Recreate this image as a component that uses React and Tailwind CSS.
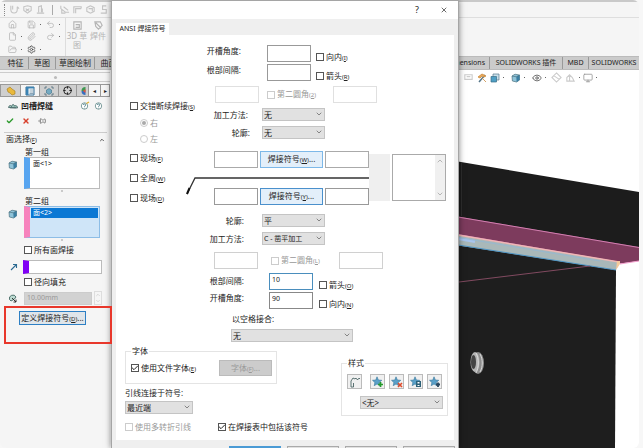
import React from "react";
import clsx from "clsx";
import {
  Home,
  Save,
  Undo2,
  Redo2,
  File,
  Paperclip,
  FolderOpen,
  Settings,
  ChevronDown,
  ChevronUp,
  Eye,
  Monitor,
  Crosshair,
  X,
  Check,
  Pin,
} from "lucide-react";

/* ---------- small form parts ---------- */

const Key = ({ children }) => (
  <span className="text-[6px]">
    (<u>{children}</u>)
  </span>
);

const CheckBox = ({ id, label, hotkey, checked, disabled, className }) => (
  <label
    htmlFor={id}
    className={clsx(
      "flex h-2.5 items-center gap-0.5 whitespace-nowrap",
      disabled && "text-[#999]",
      className
    )}
  >
    <span className="relative flex size-2 shrink-0">
      <input
        id={id}
        type="checkbox"
        defaultChecked={checked}
        disabled={disabled}
        className="peer size-2 appearance-none border border-[#555] bg-white disabled:border-[#ccc]"
      />
      <Check
        strokeWidth={3}
        className="pointer-events-none absolute inset-0 hidden size-2 peer-checked:block"
      />
    </span>
    <span>
      {label}
      {hotkey && <Key>{hotkey}</Key>}
    </span>
  </label>
);

const RadioItem = ({ id, label, checked }) => (
  <label htmlFor={id} className="flex h-2.5 items-center gap-0.5 text-[#999]">
    <span className="relative flex size-2">
      <input
        id={id}
        type="radio"
        name="side"
        disabled
        defaultChecked={checked}
        className="peer size-2 appearance-none rounded-full border border-[#ccc] bg-white"
      />
      <span className="absolute inset-0.5 hidden rounded-full bg-[#aaa] peer-checked:block" />
    </span>
    {label}
  </label>
);

const TextBox = ({ id, label, value = "", className }) => (
  <input
    id={id}
    type="text"
    aria-label={label}
    defaultValue={value}
    className={clsx("h-[17px] w-11 shrink-0 border bg-white px-0.5 pb-1 text-[7px]", className || "border-[#999]")}
  />
);

const SelectBox = ({ id, label, value, className }) => (
  <span className={clsx("relative flex h-[13px] shrink-0", className)}>
    <select
      id={id}
      aria-label={label}
      className="h-full w-full appearance-none border border-[#c4c4c4] bg-[#e1e1e1] pl-px leading-none"
    >
      <option>{value}</option>
    </select>
    <ChevronDown className="pointer-events-none absolute top-0.5 right-0.5 size-2 text-[#555]" />
  </span>
);

const FieldLabel = ({ htmlFor, children, className }) => (
  <label htmlFor={htmlFor} className={clsx("shrink-0 text-right leading-[12px] whitespace-nowrap", className)}>
    {children}
  </label>
);

/* ---------- icons ---------- */

const WeldGlyph = ({ d, className = "text-[#c4c4c4]" }) => (
  <svg viewBox="0 0 12 12" className={clsx("size-[11px]", className)} fill="none" stroke="currentColor" strokeWidth="1.2">
    <path d={d} />
  </svg>
);

const CubeIcon = () => (
  <svg viewBox="0 0 10 10" className="size-2.5">
    <path d="M1 3 4 1.2 8.5 2v5L5.6 9 1.4 8z" fill="#8fc3d8" stroke="#4b7180" strokeWidth=".7" />
    <path d="M5.3 3.8 8.5 2v5L5.6 9z" fill="#3b7fa3" />
    <path d="M1 3 5.3 3.8 8.5 2" fill="none" stroke="#4b7180" strokeWidth=".7" />
  </svg>
);

const StackIcon = () => (
  <svg viewBox="0 0 10 10" className="size-2.5">
    <path d="M3 1h6v6H3z" fill="#c9e0ea" stroke="#56778a" strokeWidth=".7" />
    <path d="M1 3.500h5.500V9H1z" fill="#4f9fc4" stroke="#3a6f88" strokeWidth=".7" />
  </svg>
);

const BeadIcon = () => (
  <svg viewBox="0 0 10 8" className="h-2 w-2.5">
    <path d="M.5 5.5C1 3 3 3 3.5 4.5 4 2 6 2 6.5 4 8 3 9.500 4 9.500 6z" fill="#9cc7bd" stroke="#3d5c5c" strokeWidth=".8" />
    <path d="M2 5.800h6" stroke="#3d5c5c" strokeWidth=".7" />
  </svg>
);

const HelpIcon = ({ spark }) => (
  <svg viewBox="0 0 10 10" className="size-2.5">
    <circle cx="4.500" cy="5" r="3.200" fill="#fff" stroke="#4b7777" strokeWidth=".7" />
    <path d="M3.300 4c.2-1.500 2.600-1.300 2.300.2-.2.700-1.100.8-1.100 1.600M4.500 6.800v.6" fill="none" stroke="#3f7580" strokeWidth=".9" />
    {spark && <path d="M6.500 2.500 9 1" stroke="#e0b030" strokeWidth="1.200" />}
  </svg>
);

const StarIcon = ({ children }) => (
  <svg viewBox="0 0 12 12" className="size-3">
    <path d="M5 .8 6.400 4l3.400.3-2.600 2.200.8 3.200L5 8 2.200 9.700l.7-3.200L.5 4.300 3.800 4z" fill="#5aa0c8" stroke="#35759a" strokeWidth=".6" />
    {children}
  </svg>
);

const Dot = () => <span className="size-px bg-[#666]" />;

/* ---------- main window ---------- */

const ribbonGlyphs = [
  "M2 2v4c0 5 7 5 7 0V3M4 2v4M9 3l2 2",
  "M2 3l4-1 4 1v4l-4 3-4-3zM4 5l4 3M8 5 4 8",
  "M2 10h8M4 9V3l3-1v7M8 9V5",
];
const ribbonGlyphs2 = [
  "M2 2v3l5 4h4M3 6v4h4M5 3l5 4",
  "M2 10V3h8v2M4 10V5h6",
  "M6 2 2 4v4l4 2 4-2V4zM4 5h4v3",
  "M9 2H5v4h4v4H3",
  "M2 3h8v7H2zM4 5l4 3",
];

const Tab = ({ children, className }) => (
  <button
    className={clsx(
      "h-full shrink-0 border-r border-[#999] text-center whitespace-nowrap",
      className
    )}
  >
    {children}
  </button>
);

const Ribbon = () => (
  <header className="border-t-2 border-[#c9c9c9] bg-[#f5f5f5]">
    <div className="flex h-4 items-center gap-0.5 border-b border-[#dedede] pl-1">
      <span className="mr-0.5 h-3 border-l border-dotted border-[#888]" />
      {ribbonGlyphs.map((d) => (
        <WeldGlyph key={d} d={d} />
      ))}
      <span className="mx-1 h-2.5 w-px bg-[#aaa]" />
      {ribbonGlyphs2.map((d) => (
        <WeldGlyph key={d} d={d} />
      ))}
    </div>
    <div className="flex h-[38px] text-[#b4b4b4]">
      <div className="grid w-[66px] grid-cols-3 items-center border-r border-[#ddd] pl-2">
        <Home className="size-[9px]" />
        <span className="flex items-center gap-1"><Save className="size-[9px]" /><Dot /></span>
        <span className="flex items-center gap-1"><Undo2 className="size-[9px]" /><Dot /></span>
        <span className="flex items-center gap-1"><File className="size-[9px]" /><Dot /></span>
        <Paperclip className="size-[9px]" />
        <span className="flex items-center gap-1"><Redo2 className="size-[9px]" /><Dot /></span>
        <span className="flex items-center gap-1"><FolderOpen className="size-[9px]" /><Dot /></span>
        <span className="flex items-center gap-1"><Settings className="size-[9px] text-[#444]" /><Dot /></span>
      </div>
      <button className="flex w-[22px] flex-col items-center pt-0.5 leading-[9px]">
        <WeldGlyph d="M2 2h8v8H2zM4 5h4v3H4" className="shrink-0 text-[#b4b4b4]" />
        3D 草图
      </button>
      <button className="flex w-5 flex-col items-center pt-0.5 leading-[9px]">
        <WeldGlyph d="M2 2h6l2 4-4 4-3-3zM3 3l6 6" className="shrink-0 text-[#b4b4b4]" />
        焊件
      </button>
    </div>
    <nav className="flex h-3.5 justify-between border-y border-[#bbb] bg-[#cbcbcb] pl-[3px]">
      <div className="flex">
        <Tab className="w-[26px]">特征</Tab>
        <Tab className="w-[27px]">草图</Tab>
        <Tab className="w-[39px]">草图绘制</Tab>
        <Tab className="w-7">曲面</Tab>
      </div>
      <div className="flex justify-end text-[7px]">
        <Tab className="w-12 pr-1 text-right">Dimensions</Tab>
        <Tab className="w-[73px]">SOLIDWORKS 插件</Tab>
        <Tab className="w-[26px]">MBD</Tab>
        <Tab className="w-[50px] border-r-0">SOLIDWORKS</Tab>
      </div>
    </nav>
  </header>
);

const SelectionList = ({ label, item, bar, active }) => (
  <div className="flex">
    <div className="w-6 pt-[13px] pl-2">
      <CubeIcon />
    </div>
    <div>
      <h3 className="h-2.5 pl-px leading-[10px]">{label}</h3>
      <ul
        aria-label={label}
        className={clsx(
          "h-8 w-[76px] border border-l-6 p-px",
          bar,
          active ? "bg-[#cfe5f8]" : "bg-white"
        )}
      >
        <li className={clsx("h-2.5 px-0.5 text-[7px] leading-[9px]", active && "bg-[#0b78d4] text-white")}>
          {item}
        </li>
      </ul>
      <div className="mx-auto mt-px size-0.5 rounded-full bg-[#bbb]" />
    </div>
  </div>
);

const PropertyPanel = () => (
  <aside className="w-[110px] shrink-0 bg-[#f5f5f5]">
    <div className="mt-0.5 flex h-2.5 items-center justify-center border-y border-[#ccc]">
      <span className="size-[3px] rounded-full bg-[#bbb]" />
    </div>
    <div className="mt-0.5 flex h-[13px] border border-[#999] bg-[#cfcfcf] pl-px">
      <button aria-label="特征树" className="flex w-[19px] items-center justify-center border-r border-[#999]">
        <svg viewBox="0 0 10 10" className="size-2.5">
          <path d="M1 3 4 1l2 2 3 2v3L6 9 4 7 2 6z" fill="#e9b93c" stroke="#a67c1d" strokeWidth=".6" />
        </svg>
      </button>
      <button aria-label="属性" className="flex w-[19px] items-center justify-center border-r border-[#999] bg-[#f5f5f5]">
        <svg viewBox="0 0 10 10" className="size-2.5">
          <path d="M1 1h8v8H1z" fill="#fff" stroke="#336d94" />
          <path d="M1 1h8v1.500H1zM1 1h2.500v8H1z" fill="#3b83b3" />
          <path d="M4.500 4h4M4.500 6h4M4.500 7.500h4" stroke="#5a7f99" strokeWidth=".7" />
        </svg>
      </button>
      <button aria-label="配置" className="flex w-[19px] items-center justify-center border-r border-[#999]">
        <svg viewBox="0 0 10 10" className="size-2.5">
          <path d="M1 3V1h2M7 1h2v2M9 7v2H7M3 9H1V7" fill="none" stroke="#4b6b7a" strokeWidth=".8" />
          <path d="M2.500 4 5 2.500 7.500 4v3L5 8.500 2.500 7z" fill="#74aac2" stroke="#3a728b" strokeWidth=".6" />
        </svg>
      </button>
      <button aria-label="尺寸" className="flex w-[18px] items-center justify-center border-r border-[#999]">
        <Crosshair strokeWidth={2.5} className="size-[9px]" />
      </button>
      <button aria-label="外观" className="flex w-3 items-center justify-center border-r border-[#999]">
        <svg viewBox="0 0 5 10" className="h-2.5 w-1.5">
          <path d="M5 1A4 4 0 0 0 1 5h4z" fill="#3d9950" />
          <path d="M1 5a4 4 0 0 0 4 4V5z" fill="#356fc1" />
          <path d="M5 3v4L2.500 5z" fill="#e5523c" />
        </svg>
      </button>
      <button aria-label="向左" className="w-[11px] bg-[#f5f5f5] text-[6px] leading-none">◂</button>
      <button aria-label="向右" className="flex-1 border-l border-[#999] bg-[#f5f5f5] text-[6px] leading-none">▸</button>
    </div>

    <div className="flex h-[17px] items-center pr-1.5 pl-2">
      <BeadIcon />
      <h2 className="ml-[3px] flex-1 font-bold">凹槽焊缝</h2>
      <button aria-label="新增功能"><HelpIcon spark /></button>
      <button aria-label="帮助" className="ml-1"><HelpIcon /></button>
    </div>
    <div className="flex h-3.5 items-center gap-2 pl-1.5">
      <button aria-label="确定"><Check strokeWidth={4} className="size-2 text-[#2c9a2c]" /></button>
      <button aria-label="取消"><X strokeWidth={4} className="size-2 text-[#d8402c]" /></button>
      <button aria-label="固定"><Pin strokeWidth={3} className="size-2 rotate-90 text-[#888]" /></button>
    </div>

    <div className="mt-1 ml-1 flex h-3.5 w-[103px] items-center justify-between border-t border-[#ccc] pr-0.5 pl-0.5">
      <span>面选择<Key>F</Key></span>
      <ChevronUp strokeWidth={3} className="size-1.5" />
    </div>

    <div className="mt-px flex flex-col gap-1">
      <SelectionList label="第一组" item="面<1>" bar="border-[#bbb] border-l-[#58a5f0]" />
      <SelectionList label="第二组" item="面<2>" bar="border-[#8dbde6] border-l-[#f783bd]" active />
    </div>

    <CheckBox id="all-faces" label="所有面焊接" className="mt-1 ml-6" />
    <div className="mt-1 flex h-[15px] items-center">
      <span className="w-[23px] pl-2.5">
        <svg viewBox="0 0 8 8" className="size-2">
          <path d="M1 7 6 2M3 1.500h3.500V5" fill="none" stroke="#2d6b92" strokeWidth="1.100" />
        </svg>
      </span>
      <input aria-label="焊接路径" className="h-3.5 w-[79px] border border-l-6 border-[#bbb] border-l-[#8000f5] bg-white" />
    </div>
    <CheckBox id="radial" label="径向填充" className="mt-[3px] ml-6" />
    <div className="mt-1 flex h-3.5 items-center">
      <span className="w-6 pl-2">
        <svg viewBox="0 0 10 10" className="size-2.5">
          <path d="M1.500 6.500A3.500 3.500 0 0 1 8 4L6.500 6 3 8z" fill="#bddbd2" stroke="#2f5650" strokeWidth=".8" />
          <path d="M4 5l4 4M8 6.500V9H5.500" fill="none" stroke="#222" strokeWidth=".9" />
        </svg>
      </span>
      <input
        aria-label="半径"
        disabled
        defaultValue="10.00mm"
        className="h-[13px] w-[68px] border border-[#ccc] bg-[#d2d2d2] px-0.5 pb-0.5 text-[7px] text-[#999]"
      />
      <span className="ml-0.5 flex flex-col border border-[#ddd] text-[#bbb]">
        <ChevronUp className="size-1.5" />
        <ChevronDown className="size-1.5" />
      </span>
    </div>
    <div className="relative z-10 mt-px mr-[-2px] ml-1 h-[38px] border-2 border-[#e8372b]">
      <button className="mt-[3px] ml-[13px] h-3.5 w-[67px] border border-[#2d7fc4] bg-[#dfe5ea] leading-[11px] whitespace-nowrap">
        定义焊接符号<Key>D</Key>...
      </button>
    </div>
  </aside>
);

const Viewport = () => (
  <main className="flex flex-1 flex-col items-end bg-white">
    <div className="flex h-[15px] w-[176px] items-center gap-[3px] text-[#999]">
      <WeldGlyph d="M2 3h8v5H2zM4 5h4" className="text-[#ccc]" />
      <svg viewBox="0 0 10 10" className="size-2.5">
        <path d="M2 9 8 2" stroke="#56778a" strokeWidth="1.500" />
        <path d="M1 4l4-3 4 2-2 1-2-1-2 2zM5 5l4 4" fill="#ecaa5b" stroke="#c98a3d" strokeWidth=".8" />
      </svg>
      <StackIcon />
      <Dot />
      <span className="ml-1"><CubeIcon /></span>
      <Dot />
      <Eye className="ml-1 size-2.5 text-[#555]" />
      <Dot />
      <WeldGlyph d="M6 1 11 6 6 11 1 6zM3 4l6 4" className="ml-0.5 text-[#ccc]" />
      <WeldGlyph d="M2 10V6l3-3 3 3 2 4zM5 3v7" className="text-[#ccc]" />
      <Dot />
      <Monitor className="size-2.5" />
      <Dot />
    </div>
    <svg viewBox="455 85 184 363" className="h-[363px] w-[184px] shrink-0">
      <path d="M455 161 639 192v57L455 217z" fill="#1c1c1c" />
      <path d="M455 244 616 270 615 448H455z" fill="#1e1e1e" />
      <path d="M455 216 639 247v14l-22 3L455 235z" fill="#7d3b5d" />
      <path d="M455 216.500 639 247.500M455 234 618 262" stroke="#d37fb1" strokeWidth="1" />
      <path d="M455 235 620 262 616 270 455 245z" fill="#a9b8b9" />
      <path d="M455 234.500 619 262" stroke="#f0b7b5" strokeWidth="1.500" />
      <path d="M455 238 475 241.500" stroke="#a8c5ed" strokeWidth="3" />
      <path d="M455 237 600 261" stroke="#93b8d4" strokeWidth=".8" />
      <path d="M455 244.500 616 270" stroke="#4d94c4" strokeWidth="1" />
      <path d="M617 261h3v3l-4 6z" fill="#f5c99b" />
      <path d="M620 264 639 261" stroke="#f39dcc" />
      <path d="M455 282.500 590 266" stroke="#9b5671" strokeWidth=".8" />
      <path d="M461.500 162v54" stroke="#3a3a3a" strokeWidth=".6" />
      <ellipse cx="478" cy="363" rx="6" ry="11" fill="#8d8d8d" />
      <ellipse cx="475" cy="362" rx="4.500" ry="10" fill="#b5b5b5" />
      <ellipse cx="473.500" cy="362" rx="2.500" ry="7" fill="#444" />
      <path d="M476 353c3 5 3 15 0 20M480 354c3 5 3 13 0 18" fill="none" stroke="#e2e2e2" strokeWidth=".9" />
    </svg>
  </main>
);

/* ---------- weld symbol dialog ---------- */

const WeldRow = ({ hotkey, btn, box }) => (
  <div className="ml-[27px] flex gap-0.5">
    <TextBox label="前缀" className={box} />
    <button className={clsx("h-[17px] w-16 border text-center whitespace-nowrap", btn)}>
      焊接符号<Key>{hotkey}</Key>...
    </button>
    <TextBox label="后缀" className={box} />
  </div>
);

const IconButton = ({ label, children, className }) => (
  <button
    aria-label={label}
    className={clsx("flex size-[15px] items-center justify-center border border-[#bbb] bg-[#f0f0f0]", className)}
  >
    {children}
  </button>
);

const WeldDialog = () => (
  <section
    role="dialog"
    aria-label="ANSI 焊接符号"
    className="absolute inset-y-0 left-[111px] flex w-[348px] flex-col overflow-hidden border border-b-0 border-[#a5a5a5] bg-[#efefef] shadow-[0_0_6px_rgba(0,0,0,0.5)]"
  >
    <div className="flex h-[18px] shrink-0 items-center justify-end gap-[21px] bg-white pr-2.5 text-[9px]">
      <button aria-label="帮助">?</button>
      <button aria-label="关闭"><X strokeWidth={2} className="size-2" /></button>
    </div>
    <div className="mt-1 ml-1 flex h-3 shrink-0">
      <button className="w-[53px] bg-white text-[7px] whitespace-nowrap">ANSI 焊接符号</button>
    </div>

    <div className="mr-1 ml-1 h-[405px] shrink-0 bg-white pl-[9px]">
      <div className="flex">
        {/* left options */}
        <div className="ml-[5px] flex w-[57px] flex-col pt-[66px]">
          <CheckBox id="stagger" label="交错断续焊接" hotkey="S" />
          <div className="mt-[7px] ml-2.5 flex flex-col gap-1.5">
            <RadioItem id="side-right" label="右" checked />
            <RadioItem id="side-left" label="左" />
          </div>
          <div className="mt-[9px] flex flex-col gap-2.5">
            <CheckBox id="field-1" label="现场" hotkey="F" />
            <CheckBox id="around" label="全周" hotkey="W" />
            <CheckBox id="field-2" label="现场" hotkey="D" />
          </div>
        </div>

        {/* symbol definition */}
        <div className="flex flex-1 flex-col pt-2.5">
          <div className="flex">
            <FieldLabel htmlFor="angle-1" className="w-[54px]">开槽角度:</FieldLabel>
            <TextBox id="angle-1" className="ml-[26px] border-[#999]" />
            <CheckBox id="inward-1" label="向内" hotkey="I" className="mt-[7px] ml-[5px]" />
          </div>
          <div className="mt-0.5 flex">
            <FieldLabel htmlFor="gap-1" className="w-[54px]">根部间隔:</FieldLabel>
            <TextBox id="gap-1" className="ml-[26px] border-[#999]" />
            <CheckBox id="arrow-1" label="箭头" hotkey="R" className="mt-[7px] ml-[5px]" />
          </div>
          <div className="mt-[5px] flex items-center">
            <TextBox label="圆角" className="ml-7 border-[#e0e0e0]" />
            <CheckBox id="fillet-1" label="第二圆角" hotkey="2" disabled className="ml-2 w-[66px]" />
            <TextBox label="第二圆角" className="border-[#e0e0e0]" />
          </div>
          <div className="mt-[5px] flex items-center">
            <FieldLabel htmlFor="method-1" className="w-[61px]">加工方法:</FieldLabel>
            <SelectBox id="method-1" value="无" className="ml-3.5 w-[63px]" />
          </div>
          <div className="mt-[5px] flex items-center">
            <FieldLabel htmlFor="contour-1" className="w-[63px]">轮廓:</FieldLabel>
            <SelectBox id="contour-1" value="无" className="ml-3 w-[63px]" />
          </div>

          <div className="mt-3 flex">
            <div className="w-[182px]">
              <WeldRow hotkey="W" btn="border-[#7db8e8] bg-[#e3effa]" box="border-[#aaa]" />
              <svg viewBox="0 0 182 20" className="h-5 w-full overflow-visible">
                <path d="M0 26 8 10H182" fill="none" stroke="#333" strokeWidth="1.300" />
                <path d="M0 26 2.500 20" stroke="#111" strokeWidth="2" />
              </svg>
              <WeldRow hotkey="Y" btn="border-[#4a90cc] bg-[#e3effa]" box="border-[#999]" />
            </div>
            <div className="mt-[3px] h-[47px] w-[21px] bg-[#efefef]" />
            <div className="mt-[3px] ml-0.5 flex h-[47px] w-[54px] border border-[#aaa]">
              <textarea aria-label="说明" className="min-w-0 flex-1 resize-none" />
              <div className="flex w-2.5 flex-col items-center justify-between bg-[#f0f0f0] py-0.5 text-[#999]">
                <ChevronUp className="size-2" />
                <ChevronDown className="size-2" />
              </div>
            </div>
          </div>

          <div className="mt-[9px] flex items-center">
            <FieldLabel htmlFor="contour-2" className="w-[57px]">轮廓:</FieldLabel>
            <SelectBox id="contour-2" value="平" className="ml-[18px] w-[63px]" />
          </div>
          <div className="mt-[5px] flex items-center">
            <FieldLabel htmlFor="method-2" className="w-[57px]">加工方法:</FieldLabel>
            <SelectBox id="method-2" value="C - 凿平加工" className="ml-[18px] w-[63px] text-[7px]" />
          </div>
          <div className="mt-[7px] flex items-center">
            <TextBox label="圆角" className="ml-[27px] border-[#d0d0d0]" />
            <CheckBox id="fillet-2" label="第二圆角" hotkey="L" disabled className="ml-[13px] w-[68px]" />
            <TextBox label="第二圆角" className="border-[#d0d0d0]" />
          </div>
          <div className="mt-1 flex">
            <FieldLabel htmlFor="gap-2" className="mt-0.5 w-[57px]">根部间隔:</FieldLabel>
            <TextBox id="gap-2" value="10" className="ml-[25px] border-[#4a8ebd]" />
            <CheckBox id="arrow-2" label="箭头" hotkey="O" className="mt-[7px] ml-1.5" />
          </div>
          <div className="mt-0.5 flex">
            <FieldLabel htmlFor="angle-2" className="w-[57px]">开槽角度:</FieldLabel>
            <TextBox id="angle-2" value="90" className="ml-[25px] border-[#888]" />
            <CheckBox id="inward-2" label="向内" hotkey="N" className="mt-[7px] ml-1.5" />
          </div>
          <FieldLabel htmlFor="joint" className="mt-1 ml-[45px] self-start">以空格接合:</FieldLabel>
          <SelectBox id="joint" value="无" className="mt-1 ml-11 w-[122px]" />
        </div>
      </div>

      <div className="mt-1 flex">
        <div className="w-[152px]">
          <fieldset className="h-[38px] border border-[#e4e4e4] pl-[5px]">
            <legend className="px-px leading-[10px]">字体</legend>
            <div className="flex items-start">
              <CheckBox id="doc-font" label="使用文件字体" hotkey="E" checked className="mt-[7px]" />
              <button disabled className="mt-1 mr-1 ml-auto h-4 w-[53px] border border-[#bbb] bg-[#ccc] text-[#999]">
                字体<Key>F</Key>...
              </button>
            </div>
          </fieldset>
          <label htmlFor="leader" className="mt-1 block leading-[10px]">引线连接于符号:</label>
          <SelectBox id="leader" value="最近端" className="mt-[3px] w-[68px]" />
        </div>
        <fieldset className="mt-3 ml-16 h-[58px] w-[107px] border border-[#e4e4e4] pl-[5px]">
          <legend className="px-px leading-[10px]">样式</legend>
          <div className="mt-1.5 flex gap-1">
            <IconButton label="符号" className="mr-1">
              <svg viewBox="0 0 12 12" className="size-3" fill="none" stroke="#4a6464" strokeWidth=".9">
                <path d="M2 11V5l2-3 2 1M2 11h2.500V7M6 2.500h1.500L8.500 4l1-1.500H11" />
              </svg>
            </IconButton>
            <IconButton label="添加">
              <StarIcon><path d="M8.500 6v5M6 8.500h5" stroke="#259a2c" strokeWidth="1.700" /></StarIcon>
            </IconButton>
            <IconButton label="删除">
              <StarIcon><path d="M7 7l4 4M11 7l-4 4" stroke="#df4b2b" strokeWidth="1.600" /></StarIcon>
            </IconButton>
            <IconButton label="保存">
              <StarIcon><path d="M6 5h5v6H6z" fill="#2c6178" /><path d="M7.500 6h2v1.500h-2zM7.500 9h2v1h-2z" fill="#fff" /></StarIcon>
            </IconButton>
            <IconButton label="装入">
              <StarIcon><path d="M7 8.500h4M9 6.500v4.500" stroke="#29465d" strokeWidth="1.800" /></StarIcon>
            </IconButton>
          </div>
          <SelectBox label="样式" value="<无>" className="mt-[7px] ml-[13px] w-[83px]" />
        </fieldset>
      </div>
      <div className="mt-1.5 flex">
        <CheckBox id="multi-jog" label="使用多转折引线" disabled className="w-[93px]" />
        <CheckBox id="in-table" label="在焊接表中包括该符号" checked />
      </div>
    </div>

    <div className="mt-1.5 mr-[3px] flex shrink-0 justify-end gap-1.5">
      <button aria-label="确定" className="h-4 w-[52px] border-2 border-[#4b9bd5] bg-[#e1e1e1]" />
      <button aria-label="取消" className="h-4 w-[52px] border border-[#aaa] bg-[#e1e1e1]" />
      <button aria-label="应用" className="h-4 w-[52px] border border-[#aaa] bg-[#e1e1e1]" />
      <button aria-label="帮助" className="h-4 w-[52px] border border-[#aaa] bg-[#e1e1e1]" />
    </div>
  </section>
);

const App = () => (
  <div className="relative h-screen overflow-hidden bg-[#f7f7f7] pr-1 font-['Noto_Sans','Noto_Sans_CJK_SC',sans-serif] text-[8px] leading-[10px] text-[#222]">
    <div className="flex h-full flex-col overflow-hidden rounded-md">
      <Ribbon />
      <div className="flex min-h-0 flex-1">
        <PropertyPanel />
        <Viewport />
      </div>
    </div>
    <WeldDialog />
  </div>
);

export default App;
